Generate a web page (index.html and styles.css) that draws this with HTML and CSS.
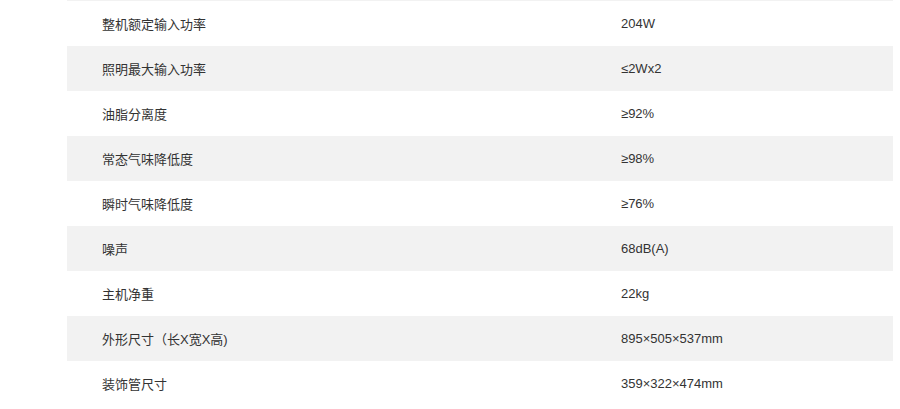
FILE: index.html
```html
<!DOCTYPE html>
<html lang="zh">
<head>
<meta charset="utf-8">
<link rel="stylesheet" href="styles.css">
</head>
<body>
<div class="specs">
  <div class="row edge"></div>
  <div class="row"><div class="k">整机额定输入功率</div><div class="v">204W</div></div>
  <div class="row alt"><div class="k">照明最大输入功率</div><div class="v">≤2Wx2</div></div>
  <div class="row"><div class="k">油脂分离度</div><div class="v">≥92%</div></div>
  <div class="row alt"><div class="k">常态气味降低度</div><div class="v">≥98%</div></div>
  <div class="row"><div class="k">瞬时气味降低度</div><div class="v">≥76%</div></div>
  <div class="row alt"><div class="k">噪声</div><div class="v">68dB(A)</div></div>
  <div class="row"><div class="k">主机净重</div><div class="v">22kg</div></div>
  <div class="row alt"><div class="k">外形尺寸（长X宽X高)</div><div class="v">895×505×537mm</div></div>
  <div class="row"><div class="k">装饰管尺寸</div><div class="v">359×322×474mm</div></div>
</div>
</body>
</html>
```
FILE: styles.css
```css
html, body { margin: 0; padding: 0; background: #fff; }
body {
  font-family: "Liberation Sans", "Noto Sans CJK SC", sans-serif;
  font-size: 13px;
  color: #333;
}
.specs {
  width: 826px;
  margin-left: 67px;
  display: flex;
  flex-direction: column;
}
.row {
  display: grid;
  grid-template-columns: 519px 1fr;
  height: 45px;
  align-items: center;
}
.row.edge { height: 1px; background: #f2f2f2; }
.row.alt { background: #f2f2f2; }
.k { padding-left: 35px; }
.v { padding-left: 35px; }
```
